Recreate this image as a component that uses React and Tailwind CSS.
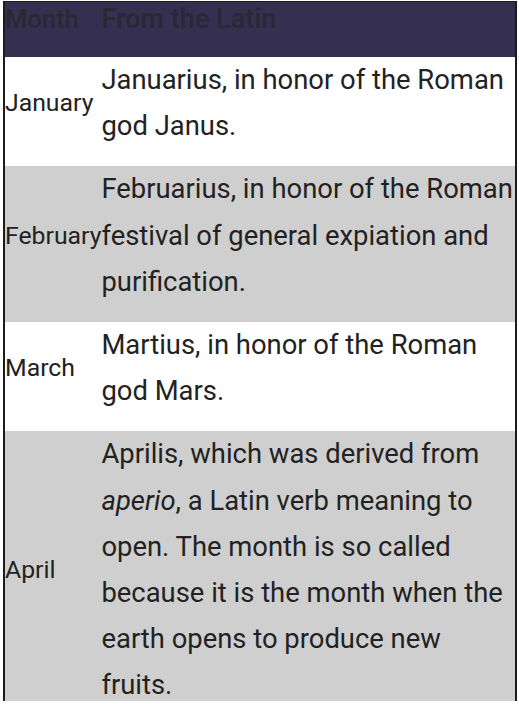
export default function App() {
  const rows = [
    { m: "January", d: <>Januarius, in honor of the Roman god Janus.</>, bg: "bg-white" },
    { m: "February", d: <>Februarius, in honor of the Roman festival of general expiation and purification.</>, bg: "bg-[#cfcfcf]" },
    { m: "March", d: <>Martius, in honor of the Roman god Mars.</>, bg: "bg-white" },
    {
      m: "April",
      d: (
        <>
          Aprilis, which was derived from <i>aperio</i>, a Latin verb meaning to open. The month is so called because it is the month when the earth opens to produce new fruits.
        </>
      ),
      bg: "bg-[#cfcfcf]",
    },
  ];
  return (
    <div className="w-[519px] h-[704px] bg-white overflow-hidden" style={{ fontFamily: "Roboto, 'Noto Sans', sans-serif" }}>
      <div className="ml-[3px] mt-[1px] w-[514px] h-[700px] overflow-hidden border-l-2 border-r-2 border-t border-[#1c1c1c] bg-white">
        <table className="w-[510px] border-collapse text-[#222]">
          <thead>
            <tr className="bg-[#35304f] h-[55px]">
              <th className="align-top text-left text-[25.5px] leading-[34px] font-semibold text-[#2a2838] pl-0 pr-[20px] whitespace-nowrap">Month</th>
              <th className="align-top text-left text-[27px] leading-[34px] font-semibold text-[#2a2838]">From the Latin</th>
            </tr>
          </thead>
          <tbody>
            {rows.map((r) => (
              <tr key={r.m} className={r.bg}>
                <td className="align-middle text-[24.8px] leading-[46px] pb-[17px] pl-0 pr-0 whitespace-nowrap">{r.m}</td>
                <td className="align-middle text-[27.4px] leading-[46.2px] pb-[17px] pl-0">{r.d}</td>
              </tr>
            ))}
          </tbody>
        </table>
      </div>
    </div>
  );
}
